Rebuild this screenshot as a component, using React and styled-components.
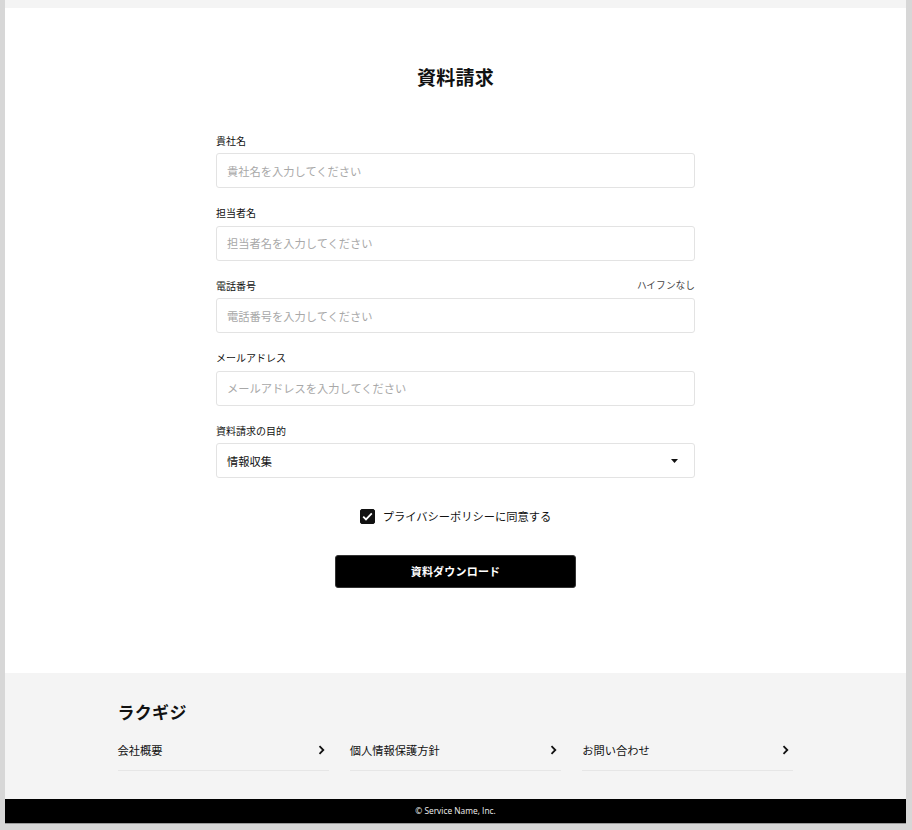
import React, { useState } from 'react';
import styled, { createGlobalStyle } from 'styled-components';

const GlobalStyle = createGlobalStyle`
  * { box-sizing: border-box; }
  html, body {
    margin: 0;
    padding: 0;
    background: #d7d7d7;
  }
  body {
    font-family: "Noto Sans CJK JP", "Noto Sans", sans-serif;
    color: #111;
  }
`;

const fields = [
  { label: '貴社名', placeholder: '貴社名を入力してください' },
  { label: '担当者名', placeholder: '担当者名を入力してください' },
  { label: '電話番号', placeholder: '電話番号を入力してください', note: 'ハイフンなし' },
  { label: 'メールアドレス', placeholder: 'メールアドレスを入力してください' },
];

const links = ['会社概要', '個人情報保護方針', 'お問い合わせ'];

const App = () => {
  const [agree, setAgree] = useState(true);
  return (
    <>
      <GlobalStyle />
      <Frame>
        <TopBar />
        <Main>
          <Title>資料請求</Title>
          <Form onSubmit={e => e.preventDefault()}>
            {fields.map(f => (
              <Field key={f.label}>
                <LabelRow>
                  <Label>{f.label}</Label>
                  {f.note && <Note>{f.note}</Note>}
                </LabelRow>
                <Input placeholder={f.placeholder} />
              </Field>
            ))}
            <Field>
              <LabelRow>
                <Label>資料請求の目的</Label>
              </LabelRow>
              <SelectBox>
                <span>情報収集</span>
                <svg width="7" height="4" viewBox="0 0 7 4">
                  <path d="M0 0h7L3.5 4z" fill="#111" />
                </svg>
              </SelectBox>
            </Field>
            <Agree onClick={() => setAgree(!agree)}>
              <CheckBox checked={agree}>
                {agree && (
                  <svg width="11" height="9" viewBox="0 0 11 9">
                    <path d="M1.2 4.6l2.8 2.8L9.8 1.4" fill="none" stroke="#fff" strokeWidth="1.8" />
                  </svg>
                )}
              </CheckBox>
              <span>プライバシーポリシーに同意する</span>
            </Agree>
            <Submit type="submit">資料ダウンロード</Submit>
          </Form>
        </Main>
        <Footer>
          <FooterInner>
            <Brand>ラクギジ</Brand>
            <LinkList>
              {links.map(l => (
                <LinkItem key={l}>
                  <span>{l}</span>
                  <svg width="7" height="10" viewBox="0 0 7 10">
                    <path d="M1.5 1.2L5.3 5 1.5 8.8" fill="none" stroke="#111" strokeWidth="1.8" />
                  </svg>
                </LinkItem>
              ))}
            </LinkList>
          </FooterInner>
        </Footer>
        <Copyright>© Service Name, Inc.</Copyright>
      </Frame>
    </>
  );
};

export default App;

const Frame = styled.div`
  margin: 0 6px 0 5px;
  display: flex;
  flex-direction: column;
  border-bottom: 1px solid #9a9a9a;
`;

const TopBar = styled.div`
  height: 8px;
  background: #f4f4f4;
`;

const Main = styled.main`
  background: #fff;
  padding: 55px 0 85px;
  display: flex;
  flex-direction: column;
  align-items: center;
`;

const Title = styled.h1`
  margin: 0 0 42px;
  font-size: 19px;
  line-height: 28px;
  font-weight: 700;
  letter-spacing: 0.3px;
`;

const Form = styled.form`
  width: 479px;
  display: flex;
  flex-direction: column;
  gap: 17.5px;
`;

const Field = styled.div`
  display: flex;
  flex-direction: column;
  gap: 6px;
`;

const LabelRow = styled.div`
  display: flex;
  justify-content: space-between;
  align-items: center;
  height: 14px;
`;

const Label = styled.label`
  font-size: 10px;
  font-weight: 400;
  color: #111;
`;

const Note = styled.span`
  font-size: 9.7px;
  color: #444;
`;

const Input = styled.input`
  height: 35px;
  width: 100%;
  border: 1px solid #e3e3e3;
  border-radius: 3px;
  padding: 0 10px;
  font-family: inherit;
  font-size: 11.25px;
  color: #111;
  outline: none;
  &::placeholder {
    color: #a8a8a8;
  }
`;

const SelectBox = styled.div`
  height: 35px;
  border: 1px solid #e3e3e3;
  border-radius: 3px;
  padding: 0 16px 0 10px;
  display: flex;
  align-items: center;
  justify-content: space-between;
  font-size: 11.25px;
  color: #111;
`;

const Agree = styled.div`
  margin-top: 13.5px;
  height: 15px;
  display: flex;
  align-items: center;
  justify-content: center;
  gap: 8px;
  font-size: 11.25px;
  line-height: 15px;
  color: #111;
  cursor: pointer;
  user-select: none;
`;

const CheckBox = styled.span`
  width: 15px;
  height: 15px;
  border-radius: 2px;
  background: ${({ checked }) => (checked ? '#111' : '#fff')};
  border: 1.5px solid #111;
  display: flex;
  align-items: center;
  justify-content: center;
`;

const Submit = styled.button`
  margin: 13px auto 0;
  width: 241px;
  height: 33px;
  border: 1px solid #333;
  border-radius: 3px;
  background: #000;
  color: #fff;
  font-family: inherit;
  font-size: 11px;
  font-weight: 700;
  letter-spacing: 0.2px;
  cursor: pointer;
`;

const Footer = styled.footer`
  background: #f4f4f4;
  padding: 26px 0 28px;
`;

const FooterInner = styled.div`
  width: 676px;
  margin: 0 auto;
`;

const Brand = styled.div`
  font-size: 17px;
  font-weight: 700;
  line-height: 26px;
  letter-spacing: 0.3px;
`;

const LinkList = styled.ul`
  list-style: none;
  margin: 15px 0 0;
  padding: 0;
  display: grid;
  grid-template-columns: repeat(3, 1fr);
  gap: 21px;
`;

const LinkItem = styled.li`
  height: 31px;
  display: flex;
  align-items: center;
  justify-content: space-between;
  padding: 0 4px 9px 0;
  border-bottom: 1px solid #e6e6e6;
  font-size: 11.25px;
  color: #111;
`;

const Copyright = styled.div`
  height: 24px;
  background: #000;
  color: #f0f0f0;
  font-family: "Open Sans", "Noto Sans", sans-serif;
  font-size: 8.4px;
  display: flex;
  align-items: center;
  justify-content: center;
`;
